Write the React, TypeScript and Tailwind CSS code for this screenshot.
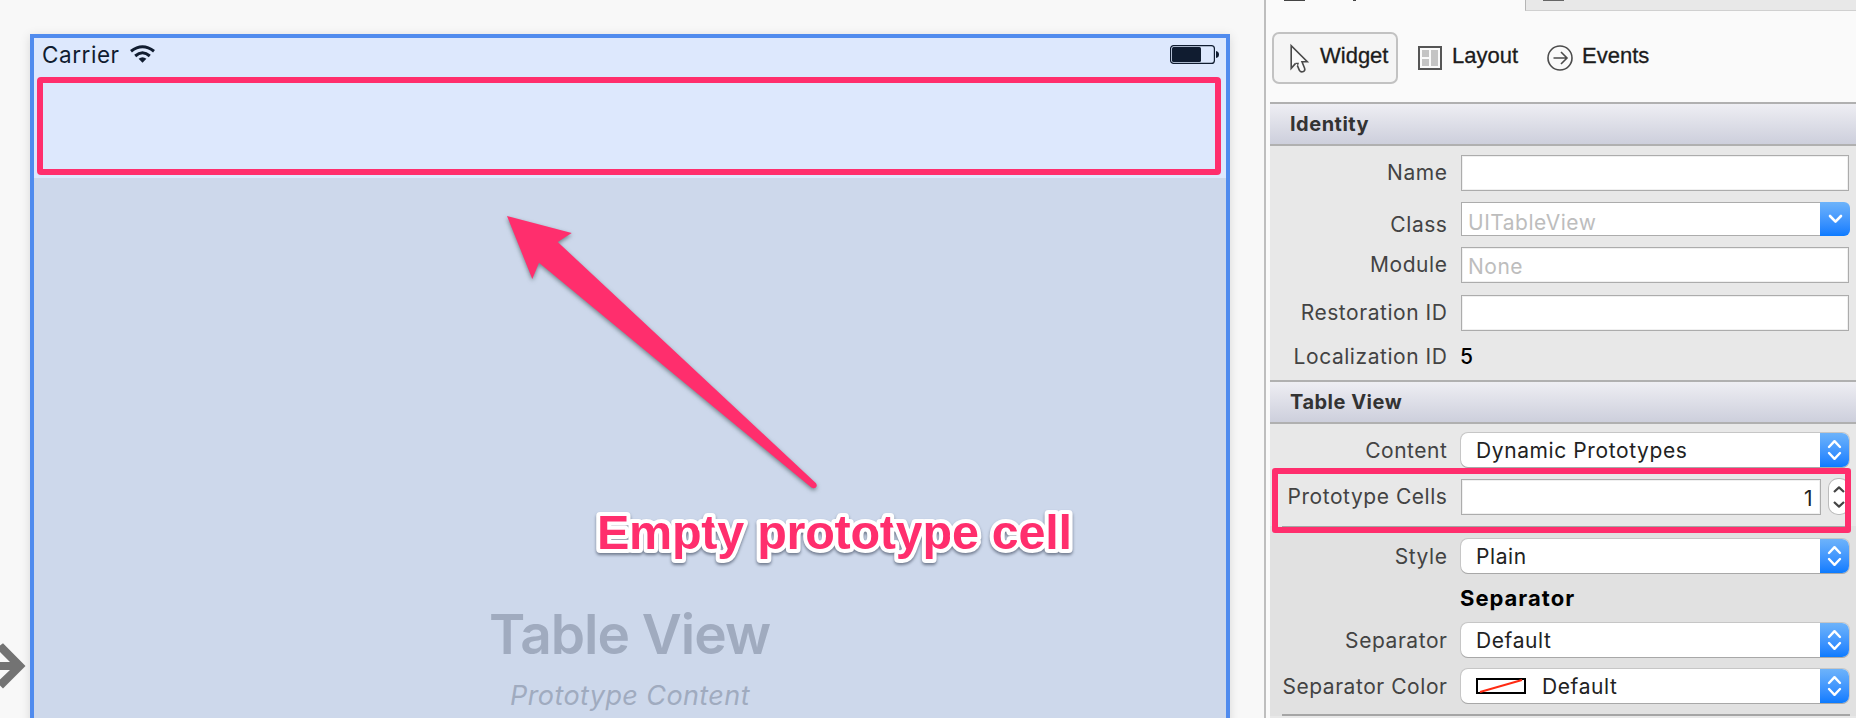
import type { ReactNode } from "react";

function Row({ h, label, labelTop = "", children }: { h: string; label?: string; labelTop?: string; children?: ReactNode }) {
  return (
    <div className={`flex items-start ${h}`}>
      <div className={`w-[177.5px] shrink-0 whitespace-nowrap text-right text-[21px] leading-6 tracking-[0.55px] text-[#434343] ${labelTop}`}>
        {label}
      </div>
      <div className="w-[13.5px] shrink-0" />
      {children}
    </div>
  );
}

function Field({ className = "w-[388px]", top, children }: { className?: string; top: string; children?: ReactNode }) {
  return (
    <div className={`flex h-9 items-center border border-[#acacac] bg-white px-[6px] text-[22px] leading-6 text-[#bdbdbd] shadow-[inset_0_0_0_1px_#f0f0f0] ${className} ${top}`}>
      {children}
    </div>
  );
}

function Select({ top, children }: { top: string; children: ReactNode }) {
  return (
    <div className={`flex h-[34px] w-[388px] overflow-hidden rounded-[7px] bg-white shadow-[0_1px_0_#a8a8a8,0_0_0_1px_#c6c6c6] ${top}`}>
      <div className="flex flex-1 items-center pl-[15px] pt-px text-[21px] leading-6 tracking-[0.6px] text-[#222]">{children}</div>
      <div className="flex w-[29px] items-center justify-center bg-linear-to-b from-[#6db3fa] to-[#0a7bff]">
        <svg width="15" height="22" viewBox="0 0 15 22" fill="none" stroke="#fff" strokeWidth="2.4" strokeLinecap="round" strokeLinejoin="round">
          <path d="M2 8 7.5 2.2 13 8M2 14 7.5 19.8 13 14" />
        </svg>
      </div>
    </div>
  );
}

function SectionHeader({ children }: { children: ReactNode }) {
  return (
    <div className="flex h-11 items-center border-y-2 border-[#b0b0b0] bg-linear-to-b from-[#eeeef3] to-[#cdcfdc] pl-[20px] text-[20px] font-bold leading-6 tracking-[0.5px] text-[#333]">
      {children}
    </div>
  );
}

function Inspector() {
  return (
    <aside className="flex w-[592px] shrink-0 flex-col border-l-2 border-[#bebebe] bg-[#fafafa] pl-1">
      <div className="flex h-[11px] items-start">
        <div className="flex w-[255px] items-start pl-[14px]">
          <div className="h-px w-[21px] bg-[#444]" />
          <div className="ml-[48px] h-px w-[3px] bg-[#444]" />
        </div>
        <div className="h-[11px] flex-1 border-b border-l border-[#d0d0d0] border-l-[#b5b5b5] bg-[#e8e8e8] pl-[17px]">
          <div className="h-px w-[21px] bg-[#666]" />
        </div>
      </div>
      <div className="flex h-[91px] pt-[21px] font-['Liberation_Sans',sans-serif] text-[22px] leading-6 text-[#1c1c1c]">
        <div className="ml-[2px] flex h-[52px] w-[126px] rounded-[7px] border-2 border-[#c2c2c2] bg-[#f5f5f5] pl-[15px] pt-[9px]">
          <svg width="22" height="32" viewBox="0 0 22 32" fill="none" stroke="#4a4a4a" strokeWidth="1.6" className="shrink-0">
            <path d="M2.2 2.6V25.3L6.6 20.4 10.2 27.4Q11.8 30 14.4 28.6 16.6 27.4 15.6 25.2L13 18.8H18.3Z" fill="#fafafa" stroke="none" />
            <path d="M6.6 20.4 2.2 25.3V2.6L18.3 18.8H13L15.6 25.2Q16.4 27.6 14.4 28.6 11.8 29.6 10.4 27.4L8.4 22.6" />
            <path d="M6.6 20.4 9.2 20.4 8.4 22.6" strokeWidth="1.2" />
          </svg>
          <span className="ml-[9px] pt-px [-webkit-text-stroke:0.3px_#1c1c1c]">Widget</span>
        </div>
        <div className="ml-5 flex pt-[11px]">
          <svg width="24" height="24" viewBox="0 0 24 24" className="mt-[3px]">
            <rect x="1" y="1" width="22" height="22" fill="#fafafa" stroke="#555" strokeWidth="2" />
            <path d="M4 4h7v7H4zM4 13h7v7H4zM13 4h7v16h-7z" fill="#c4c4c4" />
          </svg>
          <span className="ml-[10px] pt-px [-webkit-text-stroke:0.3px_#1c1c1c]">Layout</span>
        </div>
        <div className="ml-[29px] flex pt-[11px]">
          <svg width="26" height="26" viewBox="0 0 26 26" fill="none" stroke="#4c4c4c" strokeWidth="1.6" className="mt-[2px]">
            <circle cx="13" cy="13" r="12" />
            <path d="M6.5 13H20M14 7l6 6-6 6" />
          </svg>
          <span className="ml-[9px] pt-px [-webkit-text-stroke:0.3px_#1c1c1c]">Events</span>
        </div>
      </div>
      <SectionHeader>Identity</SectionHeader>
      <div className="bg-[#e8e8e8]">
        <Row h="h-[50px]" label="Name" labelTop="mt-[15px]">
          <Field top="mt-[9px]" />
        </Row>
        <Row h="h-[45px]" label="Class" labelTop="mt-[17px]">
          <div className="mt-[6px] flex h-[34px] w-[389px]">
            <div className="flex-1 border-y border-l border-[#acacac] bg-white pl-[6px] pt-[8px] text-[21px] leading-6 tracking-[0.5px] text-[#bdbdbd]">UITableView</div>
            <div className="flex w-[30px] items-center justify-center rounded-r-[6px] bg-linear-to-b from-[#6db3fa] to-[#0a7bff]">
              <svg width="15" height="10" viewBox="0 0 15 10" fill="none" stroke="#fff" strokeWidth="2.6" strokeLinecap="round" strokeLinejoin="round">
                <path d="M2 2 7.5 7.6 13 2" />
              </svg>
            </div>
          </div>
        </Row>
        <Row h="h-[48px]" label="Module" labelTop="mt-[12px]">
          <Field top="mt-[6px]"><span className="pt-[3px] text-[21px] tracking-[0.5px]">None</span></Field>
        </Row>
        <Row h="h-[48px]" label="Restoration ID" labelTop="mt-[12px]">
          <Field top="mt-[6px]" />
        </Row>
        <Row h="h-[43px]" label="Localization ID" labelTop="mt-[8px]">
          <span className="-ml-px mt-[8px] text-[21px] font-medium leading-6 text-black">5</span>
        </Row>
      </div>
      <SectionHeader>Table View</SectionHeader>
      <div className="bg-[#e8e8e8]">
        <Row h="h-[44px]" label="Content" labelTop="mt-[15px]">
          <Select top="mt-[9px]">Dynamic Prototypes</Select>
        </Row>
        <Row h="h-[58px]" label="Prototype Cells" labelTop="mt-[17px]">
          <Field className="w-[360px] justify-end" top="mt-[11px]"><span className="pr-[1.5px] pt-[3px] text-[21px] text-[#222]">1</span></Field>
          <div className="ml-2 mt-[11px] flex h-[35px] w-[20px] items-center justify-center rounded-[9px] bg-white shadow-[0_0_0_1px_#bcbcbc]">
            <svg width="12" height="24" viewBox="0 0 12 24" fill="none" stroke="#444" strokeWidth="2.2" strokeLinejoin="round">
              <path d="M1 7 6 2.4 11 7M1 17 6 21.6 11 17" />
            </svg>
          </div>
        </Row>
      </div>
      <div className="bg-[#e1e1e1]">
        <div className="ml-3 h-0.5 w-[568px] bg-[#a5a5a5]" />
        <Row h="h-[53px]" label="Style" labelTop="mt-[17px]">
          <Select top="mt-[11px]">Plain</Select>
        </Row>
        <Row h="h-[35px]">
          <span className="-ml-px mt-[5px] text-[22px] font-bold leading-6 tracking-[1px] text-black">Separator</span>
        </Row>
        <Row h="h-[47px]" label="Separator" labelTop="mt-[13px]">
          <Select top="mt-[7px]">Default</Select>
        </Row>
        <Row h="h-[51px]" label="Separator Color" labelTop="mt-[12px]">
          <Select top="mt-[6px]">
            <svg width="50" height="16" viewBox="0 0 50 16" className="-mt-px mr-[16px]">
              <rect x="1" y="1" width="48" height="14" fill="#fff" stroke="#000" strokeWidth="2" />
              <path d="M4 14 46 2" stroke="#ff2a12" strokeWidth="1.9" />
            </svg>
            Default
          </Select>
        </Row>
        <div className="ml-3 h-0.5 w-[568px] bg-[#a5a5a5]" />
      </div>
      <div className="flex-1 bg-[#e8e8e8]" />
    </aside>
  );
}

function Device() {
  return (
    <div className="ml-[30px] mt-[34px] flex h-[700px] w-[1200px] flex-col border-4 border-[#508bee] bg-[#cdd8eb] shadow-[0_2px_10px_rgba(0,0,0,0.13)]">
      <div className="h-[140px] bg-[#dde8fd]">
        <div className="flex items-start justify-between pl-[8px] pr-[7px] pt-[7px] text-[#101c30]">
          <div className="flex items-start">
            <span className="mt-[-2px] text-[22.5px] leading-6 tracking-[0.55px]">Carrier</span>
            <svg width="25" height="18" viewBox="0 0 25 18" fill="none" stroke="currentColor" strokeWidth="3" className="ml-[10px]">
              <path d="M1 6.2Q12.5 -2.8 24 6.2" />
              <path d="M5.2 11Q12.5 4.6 19.8 11" />
              <path d="M8.6 13.8Q12.5 10.6 16.4 13.8L12.5 17.8Z" fill="currentColor" stroke="none" />
            </svg>
          </div>
          <svg width="49" height="19" viewBox="0 0 49 19">
            <rect x="0.6" y="0.6" width="43.8" height="17.8" rx="3" fill="none" stroke="currentColor" strokeWidth="1.2" />
            <rect x="2" y="2" width="29" height="15" rx="1.5" fill="currentColor" />
            <path d="M46 6q3 .5 3 3.5t-3 3.5z" fill="currentColor" />
          </svg>
        </div>
      </div>
      <div className="flex flex-1 flex-col items-center pt-[423px] text-[#a0abbf]">
        <div className="pr-px text-[55px] font-semibold leading-[66px] tracking-[-1px]">Table View</div>
        <div className="mt-[13px] text-[27px] italic leading-8 tracking-[0.4px]">Prototype Content</div>
      </div>
    </div>
  );
}

export default function App() {
  return (
    <div className="relative flex h-[718px] w-[1856px] overflow-hidden bg-[#f8f8f8] font-['Inter',sans-serif]">
      <main className="h-[718px] w-[1264px] shrink-0 overflow-hidden">
        <Device />
      </main>
      <Inspector />

      <svg width="26" height="48" viewBox="0 0 26 48" className="absolute left-0 top-[642px]">
        <path d="M0 20h10L0 10V3.5L3 1.2 25.5 24 3 46.5 0 43.5V37.5L10 28H0z" fill="#737373" />
      </svg>
      <div className="absolute left-[37px] top-[77px] h-[98px] w-[1184px] rounded-[4px] border-6 border-[#ff2e6d]" />
      <div className="absolute left-[1272px] top-[468px] h-[65px] w-[579px] rounded-[3px] border-6 border-[#ff2e6d]" />
      <svg width="360" height="300" viewBox="480 200 360 300" className="absolute left-[480px] top-[200px] drop-shadow-[0_2px_2px_rgba(40,60,60,0.55)]">
        <path d="M507 216 571.7 233 557.7 242 816 483.3Q817.6 485.8 815.8 487.6 813.6 489 811.4 487.6L539 262.7 532.3 279Z" fill="#ff2e6d" />
      </svg>
      <svg width="500" height="70" viewBox="0 0 500 70" className="absolute left-[590px] top-[500px] drop-shadow-[0_2px_1.5px_rgba(50,60,80,0.6)]">
        <text
          x="7"
          y="49"
          textLength="475"
          className="fill-[#ff2e6d] stroke-white stroke-8 font-['Liberation_Sans',sans-serif] text-[48.5px] font-bold [paint-order:stroke_fill] [stroke-linejoin:round]"
        >
          Empty prototype cell
        </text>
      </svg>
    </div>
  );
}
